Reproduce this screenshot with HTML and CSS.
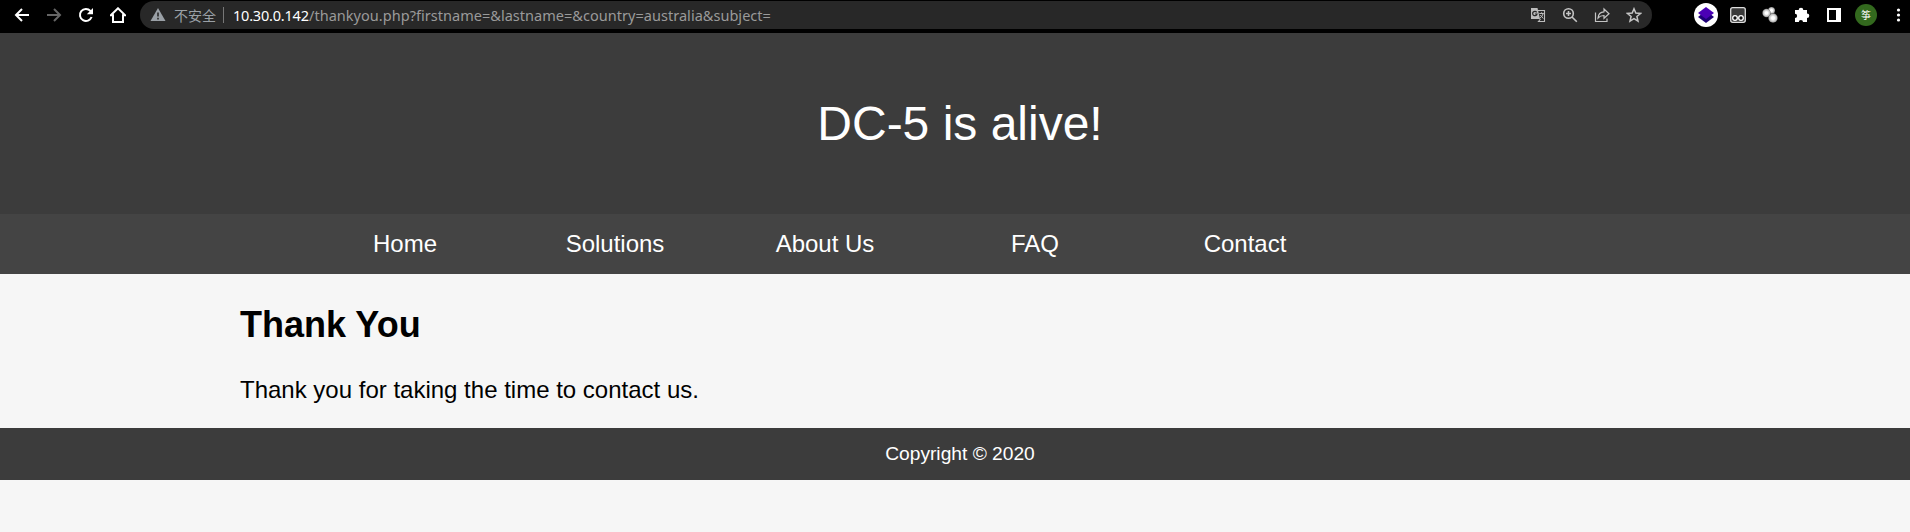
FILE: index.html
```html
<!DOCTYPE html>
<html lang="en">
<head>
<meta charset="utf-8">
<title>Thank You</title>
<link rel="stylesheet" href="styles.css">
</head>
<body>
<div class="toolbar">
  <div class="nav-buttons">
    <svg class="ico" width="16" height="16" viewBox="0 0 16 16"><path d="M15 8H2M8 2L2 8l6 6" fill="none" stroke="#fff" stroke-width="2"/></svg>
    <svg class="ico" width="16" height="16" viewBox="0 0 16 16"><path d="M1 8h13M8 2l6 6-6 6" fill="none" stroke="#666" stroke-width="2"/></svg>
    <svg class="ico" width="16" height="16" viewBox="0 0 16 16"><path d="M13.6 10A6 6 0 1 1 12.4 3.9L14 5.5" fill="none" stroke="#fff" stroke-width="2"/><path d="M15 1v6.200H8.800z" fill="#fff"/></svg>
    <svg class="ico" width="16" height="16" viewBox="0 0 16 16"><path d="M.8 8.300L8 1.300l7.200 7H13V15H3V8.300z" fill="none" stroke="#fff" stroke-width="2"/></svg>
  </div>
  <div class="omnibox">
    <svg class="warn" width="16" height="14" viewBox="0 0 16 14"><path d="M8 0l7.500 13H.5z" fill="#9aa0a6"/><path d="M7.200 4.500h1.600v4H7.200zM7.200 9.800h1.600v1.600H7.200z" fill="#282828"/></svg>
    <span class="insecure">不安全</span>
    <span class="divider"></span>
    <span class="host">10.30.0.142</span><span class="path">/thankyou.php?firstname=&amp;lastname=&amp;country=australia&amp;subject=</span>
    <div class="actions">
      <svg width="16" height="16" viewBox="0 0 16 16"><path d="M1 1h6.500l2.500 11H1z" fill="#bdbdbd"/><path d="M8 3.500h6.500v11H8.500l2-2.500" fill="none" stroke="#bdbdbd" stroke-width="1.100"/><path d="M6.700 5.300A2.200 2.200 0 1 0 7 7H4.900" fill="none" stroke="#282828" stroke-width="1.200"/><path d="M9.300 6.500h4.500M11.600 5.300v1.200M13 6.700c-.4 2-1.500 3.400-3 4.300M10.300 8l3 3.500" fill="none" stroke="#bdbdbd"/></svg>
      <svg width="16" height="16" viewBox="0 0 16 16"><circle cx="6.500" cy="6.500" r="4.800" fill="none" stroke="#c4c4c4" stroke-width="1.600"/><path d="M10 10l4.800 4.800M4 6.500h5M6.500 4v5" fill="none" stroke="#c4c4c4" stroke-width="1.600"/></svg>
      <svg width="16" height="16" viewBox="0 0 16 16"><path d="M1.500 5.500v9h11.500v-3" fill="none" stroke="#c4c4c4" stroke-width="1.200"/><path d="M4 11c.3-4 2.500-6 6-6.200V2l5 4.700-5 4.600V8.500C7.500 8.500 5.500 9.200 4 11z" fill="none" stroke="#c4c4c4" stroke-width="1.200"/></svg>
      <svg width="16" height="16" viewBox="0 0 16 16"><path d="M8 1.800l1.800 4.300 4.700.4-3.600 3 1.100 4.600L8 11.700l-4 2.400 1.100-4.600-3.600-3 4.700-.4z" fill="none" stroke="#c4c4c4" stroke-width="1.500"/></svg>
    </div>
  </div>
  <div class="extensions">
    <svg width="24" height="24" viewBox="0 0 24 24"><circle cx="12" cy="12" r="12" fill="#fff"/><path d="M4 14l2.500-2h11l2.500 2-8 6z" fill="#1f0078"/><path d="M12 4l8 6-8 6-8-6z" fill="#4b00b5"/></svg>
    <svg width="24" height="24" viewBox="0 0 24 24"><rect x="4.700" y="4.700" width="14.600" height="14.600" rx="2" fill="#3a3a3a" stroke="#ddd" stroke-width="1.300"/><g fill="#111" stroke="#fff" stroke-width="1.300"><circle cx="9" cy="15" r="2.300"/><circle cx="15" cy="15" r="2.300"/></g></svg>
    <svg width="24" height="24" viewBox="0 0 24 24"><defs><radialGradient id="ball"><stop offset=".3" stop-color="#fff"/><stop offset=".8" stop-color="#bbb"/><stop offset="1" stop-color="#777"/></radialGradient></defs><g fill="url(#ball)"><circle cx="13.500" cy="7.500" r="3.500"/><circle cx="8.500" cy="10" r="4.200"/><circle cx="15" cy="15" r="4.700"/></g></svg>
    <svg width="24" height="24" viewBox="0 0 24 24"><path d="M5 7h3.700a2.300 2.300 0 0 1 4.600 0H17v3.500a2.300 2.300 0 0 1 0 4.600V19h-4a2.100 2.100 0 0 0-4.200 0H5v-4a2.100 2.100 0 0 0 0-4.200z" fill="#fff"/></svg>
    <svg width="24" height="24" viewBox="0 0 24 24"><path d="M5 5h14v14H5zM7 7v10h7V7z" fill="#fff" fill-rule="evenodd"/></svg>
    <span class="avatar">筝</span>
    <svg width="24" height="24" viewBox="0 0 24 24"><g fill="#fff"><circle cx="12.500" cy="7" r="1.600"/><circle cx="12.500" cy="12" r="1.600"/><circle cx="12.500" cy="17" r="1.600"/></g></svg>
  </div>
</div>
<div class="page">
  <header class="header">DC-5 is alive!</header>
  <nav class="menu"><a>Home</a><a>Solutions</a><a>About Us</a><a>FAQ</a><a>Contact</a></nav>
  <main class="content"><h2>Thank You</h2><p>Thank you for taking the time to contact us.</p></main>
  <footer class="footer">Copyright © 2020</footer>
</div>
</body>
</html>
```
FILE: styles.css
```css
* { box-sizing: border-box; }
body { margin: 0; height: 532px; overflow: hidden; background: #f6f6f6; font-family: "Liberation Sans", Arial, sans-serif; }
svg { display: block; flex: none; }
.toolbar { display: flex; height: 33px; padding-top: 1px; background: #000; }
.nav-buttons { display: flex; width: 140px; height: 28px; padding-left: 14px; align-items: center; gap: 16px; }
.omnibox { display: flex; align-items: center; width: 1512px; height: 28px; padding-left: 10px; border-radius: 14px; background: #282828; font: 14.5px/28px "Noto Sans", "Noto Sans CJK SC", sans-serif; color: #9a9a9a; white-space: nowrap; }
.insecure { width: 42px; margin-left: 8px; font: 14px/26px "Noto Sans CJK SC", sans-serif; color: #9aa0a6; }
.divider { width: 1px; height: 16px; margin: 0 9px 0 7px; background: #777; }
.host { width: 76px; color: #fff; letter-spacing: -0.2px; }
.path { letter-spacing: 0.03px; }
.actions { display: flex; gap: 16px; margin-left: auto; padding-right: 10px; }
.extensions { display: flex; align-items: center; height: 28px; gap: 8px; margin-left: 42px; }
.avatar { width: 22px; height: 22px; margin: 0 1px; border-radius: 50%; background: #33691e; color: #fff; font: 10px/22px "Noto Sans CJK SC", sans-serif; text-align: center; }
.page { width: 1920px; }
.header { height: 181px; background: #3c3c3c; color: #fff; font-size: 48px; line-height: 181px; text-align: center; }
.menu { display: flex; height: 60px; padding-left: 300px; background: #444; color: #fff; font-size: 24px; line-height: 60px; text-align: center; }
.menu a { width: 210px; }
.content { height: 154px; padding: 30px 240px 0; background: #f6f6f6; font-size: 24px; color: #000; }
.content h2 { margin: 0; font-size: 36px; line-height: 41px; }
.content p { margin: 31px 0 0; line-height: 28px; }
.footer { height: 52px; background: #3c3c3c; color: #fff; font-size: 19.2px; line-height: 52px; text-align: center; }
```
